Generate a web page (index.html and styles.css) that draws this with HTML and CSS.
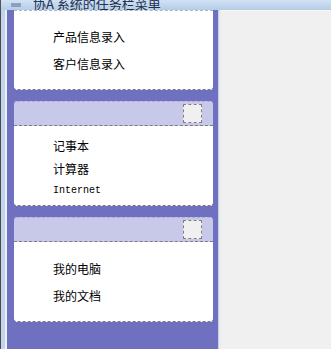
FILE: index.html
```html
<!DOCTYPE html>
<html>
<head>
<meta charset="utf-8">
<link rel="stylesheet" href="styles.css">
</head>
<body>
<div class="window">
  <div class="titlebar">
    <span class="app-icon"></span>
    <span class="title">协A 系统的任务栏菜单</span>
  </div>
  <div class="main">
    <div class="frame-edge"></div>
    <div class="sidebar">
      <div class="group">
        <div class="body body-a">
          <div class="item">产品信息录入</div>
          <div class="item">客户信息录入</div>
        </div>
      </div>
      <div class="group">
        <div class="header"><span class="toggle"></span></div>
        <div class="body body-b">
          <div class="item">记事本</div>
          <div class="item item-b2">计算器</div>
          <div class="item item-b3 latin">Internet</div>
        </div>
      </div>
      <div class="group">
        <div class="header"><span class="toggle"></span></div>
        <div class="body body-a">
          <div class="item">我的电脑</div>
          <div class="item">我的文档</div>
        </div>
      </div>
    </div>
    <div class="splitter"></div>
    <div class="content"></div>
  </div>
</div>
</body>
</html>
```
FILE: styles.css
```css
html, body {
  margin: 0;
  padding: 0;
}
body {
  font-family: "Noto Sans CJK SC", "Liberation Sans", sans-serif;
  font-size: 12px;
  color: #000;
  background: #f0f0f0;
}
.window {
  width: 331px;
  height: 349px;
  display: flex;
  flex-direction: column;
  overflow: hidden;
}
.titlebar {
  height: 10px;
  flex: none;
  display: flex;
  align-items: flex-end;
  gap: 12px;
  padding-left: 10px;
  overflow: hidden;
  background: linear-gradient(#d2e2f4, #b4cce6);
  border-left: 1px solid #555;
}
.app-icon {
  width: 10px;
  height: 4px;
  background: #8aa0c0;
  margin-bottom: 3px;
}
.title {
  font-size: 13px;
  line-height: 16px;
  color: #203050;
  margin-bottom: -2px;
}
.main {
  flex: 1;
  display: flex;
  min-height: 0;
}
.frame-edge {
  flex: none;
  border-left: 1px solid #4a4a4a;
  border-right: 2px solid #eaf0f8;
  background: #c2d4ec;
  width: 4px;
}
.sidebar {
  width: 199px;
  flex: none;
  background: #7070c0;
  padding: 0 5px 0 7px;
  display: flex;
  flex-direction: column;
  gap: 11px;
}
.group {
  display: flex;
  flex-direction: column;
}
.header {
  height: 25px;
  background: #c8c8e8;
  border-bottom: 1px dashed #7a7a8a;
  border-top: 1px dashed #b0b0d0;
  border-radius: 3px 3px 0 0;
  box-sizing: border-box;
  display: flex;
  justify-content: flex-end;
  align-items: center;
  padding-right: 11px;
}
.toggle {
  width: 19px;
  height: 19px;
  background: #f0f0f0;
  border: 1px dashed #808080;
  box-sizing: border-box;
}
.body {
  background: #fff;
  border-bottom: 1px dashed #7a7a8a;
  border-radius: 0 0 3px 3px;
  padding-left: 39px;
  box-sizing: border-box;
  height: 80px;
}
.body-a {
  padding-top: 18px;
  display: flex;
  flex-direction: column;
  gap: 9px;
}
.group:first-child .body {
  border-top: 1px dashed #b0b0c8;
  padding-top: 17px;
}
.body-b {
  padding-top: 11px;
}
.item {
  height: 18px;
  line-height: 18px;
  white-space: nowrap;
}
.item-b2 {
  margin-top: 5px;
}
.item-b3 {
  margin-top: 4px;
}
.latin {
  font-family: "Liberation Mono", monospace;
  font-size: 10px;
}
.splitter {
  width: 2px;
  flex: none;
  background: #e6ecf4;
  border-left: 1px solid #c8d0dc;
}
.content {
  flex: 1;
  background: #f0f0f0;
  border-top: 1px solid #f8f4ee;
}
```
